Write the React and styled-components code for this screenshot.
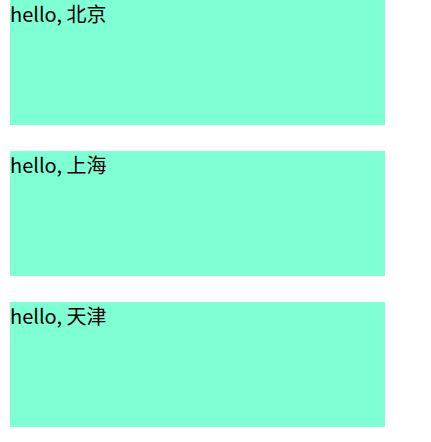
import styled, { createGlobalStyle } from "styled-components";

const GlobalStyle = createGlobalStyle`
  body {
    margin: 0;
    background: #ffffff;
  }
`;

const List = styled.div`
  display: flex;
  flex-direction: column;
  gap: 26px;
  padding: 0 10px;
`;

const Card = styled.div`
  width: 375px;
  height: 125px;
  background-color: #7fffd4;
  color: #000000;
  font-family: "Noto Sans CJK SC", sans-serif;
  font-size: 20px;
  line-height: 28px;
`;

const cities = ["北京", "上海", "天津"];

const App = () => {
  return (
    <>
      <GlobalStyle />
      <List>
        {cities.map((city) => (
          <Card key={city}>hello, {city}</Card>
        ))}
      </List>
    </>
  );
};

export default App;
